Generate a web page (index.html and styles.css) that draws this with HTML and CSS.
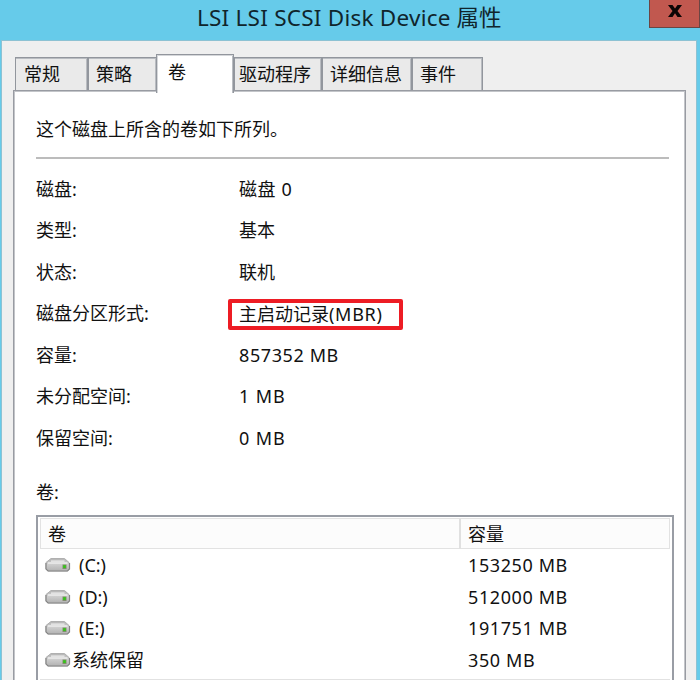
FILE: index.html
```
<!DOCTYPE html>
<html lang="zh-CN">
<head>
<meta charset="utf-8">
<title>LSI LSI SCSI Disk Device 属性</title>
<link rel="stylesheet" href="styles.css">
</head>
<body>
<svg class="defs" aria-hidden="true">
  <defs>
    <linearGradient id="top" x1="0" y1="0" x2="0" y2="1"><stop offset="0" stop-color="#b5b5b5"/><stop offset="1" stop-color="#e4e4e4"/></linearGradient>
    <linearGradient id="front" x1="0" y1="0" x2="0" y2="1"><stop offset="0" stop-color="#d2d2d2"/><stop offset="1" stop-color="#b2b2b2"/></linearGradient>
    <symbol id="drive" viewBox="0 0 26 16">
      <path d="M6 1.500H19.500L24 5.500V12L22.500 14H3L1 12V5.500Z" fill="url(#top)" stroke="#b0b0b0"/>
      <path d="M1.500 6.200H24V12L22 14H3.500L1.500 12Z" fill="url(#front)"/>
      <path d="M6 4.200H19.500M3 6H22.500" stroke="#ededed" stroke-width="1.300"/>
      <path d="M1 6V12L3 14H22.500L24.500 12V6" fill="none" stroke="#858585" stroke-width="1.200"/>
      <rect x="17.500" y="7.500" width="4" height="4.500" fill="#818b6d"/>
      <rect x="18.200" y="8.200" width="2.600" height="2.800" fill="#35c618"/>
    </symbol>
  </defs>
</svg>
<div class="window">
  <header class="titlebar">
    <h1><span class="title-name">LSI LSI SCSI Disk Device</span> 属性</h1>
    <button class="close" aria-label="关闭"><svg viewBox="0 0 16 14"><path d="M1 1H5.500L8 4.500L10.500 1H15L10.500 7L15 13H10.500L8 9.300L5.500 13H1L5.500 7Z"/></svg></button>
  </header>
  <main class="body">
    <nav class="tabs">
      <span class="tab general">常规</span>
      <span class="tab policy">策略</span>
      <span class="tab active">卷</span>
      <span class="tab driver">驱动程序</span>
      <span class="tab details">详细信息</span>
      <span class="tab events">事件</span>
    </nav>
    <section class="panel">
      <p class="intro">这个磁盘上所含的卷如下所列。</p>
      <dl class="info">
        <dt>磁盘:</dt><dd class="num">磁盘 0</dd>
        <dt>类型:</dt><dd>基本</dd>
        <dt>状态:</dt><dd>联机</dd>
        <dt>磁盘分区形式:</dt><dd class="marked">主启动记录<span class="mbr">(MBR)</span></dd>
        <dt>容量:</dt><dd class="num">857352 MB</dd>
        <dt>未分配空间:</dt><dd class="num short">1 MB</dd>
        <dt>保留空间:</dt><dd class="num short">0 MB</dd>
      </dl>
      <p class="list-label">卷:</p>
      <div class="list">
        <div class="row head"><span>卷</span><span>容量</span></div>
        <div class="row"><span class="name"><svg><use href="#drive"/></svg>(C:)</span><span class="num">153250 MB</span></div>
        <div class="row"><span class="name"><svg><use href="#drive"/></svg>(D:)</span><span class="num">512000 MB</span></div>
        <div class="row"><span class="name"><svg><use href="#drive"/></svg>(E:)</span><span class="num">191751 MB</span></div>
        <div class="row"><span class="name reserved"><svg><use href="#drive"/></svg>系统保留</span><span class="num">350 MB</span></div>
        <div class="list-end"></div>
      </div>
    </section>
  </main>
</div>
</body>
</html>
```
FILE: styles.css
```
* { box-sizing: border-box; }
body {
  margin: 0;
  overflow: hidden;
  font: 18px/24px "Noto Sans", "Noto Sans CJK SC", sans-serif;
  color: #111;
}
h1, p, dl, dd { margin: 0; }
.defs { position: absolute; width: 0; height: 0; }
.window {
  width: 700px;
  height: 680px;
  overflow: hidden;
  background: #66cbea;
  padding: 0 3px 0 1px;
}
.titlebar {
  height: 40px;
  display: flex;
  justify-content: flex-end;
}
h1 {
  width: 452px;
  padding-top: 3px;
  font-size: 22.5px;
  line-height: 30px;
  font-weight: 400;
  white-space: nowrap;
  color: #10252c;
}
.title-name { letter-spacing: .24px; }
.close {
  width: 51px;
  height: 28px;
  margin-right: -3px;
  padding: 4px 0 0;
  border: 1px solid #6b4543;
  border-top: 0;
  background: #c1584f;
  display: flex;
  justify-content: center;
}
.close svg { width: 16px; height: 14px; fill: #0b0505; }
.body {
  height: 640px;
  border: 1px solid #8dc2d3;
  border-bottom: 0;
  background: #efefef;
  padding: 13px 10px 0 11px;
}
.tabs {
  display: flex;
  align-items: flex-end;
  height: 36px;
  padding-left: 2px;
}
.tab {
  height: 33px;
  border: 1px solid #92969d;
  border-bottom: 0;
  box-shadow: inset -1px 1px #b9bcc1;
  background: #eaeaea;
  padding: 4px 0 0 8px;
  white-space: nowrap;
}
.general { width: 73px; }
.policy { width: 69px; padding-left: 7px; }
.driver { width: 88px; padding-left: 4px; }
.details { width: 90px; padding-left: 7px; }
.events { width: 71px; padding-left: 7px; }
.active {
  position: relative;
  z-index: 1;
  width: 78px;
  height: 39px;
  margin: 0 -1px -3px -1px;
  padding: 5px 0 0 11px;
  box-shadow: inset 0 1px #d5d7da, inset -1px 0 #b9bcc1, inset 1px 0 #d5d7da;
  background: #fff;
}
.driver { margin-left: 1px; }
.panel {
  height: 591px;
  border: 1px solid #989ba2;
  border-bottom: 0;
  box-shadow: inset -1px 1px #c3c5c9, inset 1px 0 #c3c5c9;
  background: #fff;
  padding: 26px 11px 0 22px;
}
.intro {
  width: 633px;
  height: 42px;
  border-bottom: 2px solid #bcbcbc;
}
.info {
  display: grid;
  grid-template-columns: 203px 1fr;
  grid-auto-rows: 41.5px;
  align-items: center;
  padding-top: 9px;
}
.num { letter-spacing: .6px; }
.short { letter-spacing: .9px; }
.mbr { letter-spacing: .7px; }
.marked {
  justify-self: start;
  width: 175px;
  height: 31px;
  line-height: 22px;
  margin: 2px 0 0 -11px;
  padding-left: 7px;
  border: 4px solid #ed1c24;
  border-radius: 2px;
}
.list-label { padding-top: 21px; height: 56px; }
.list {
  width: 638px;
  height: 190px;
  border: 2px solid #999da5;
  border-bottom: 0;
  padding: 1px 2px 0;
}
.row {
  height: 31.5px;
  display: grid;
  grid-template-columns: 420px 1fr;
  align-items: center;
}
.row > :last-child { padding-left: 8px; }
.head {
  height: 31px;
  margin-bottom: 1px;
  border: 1px solid #e2e2e2;
  background: #fcfcfc;
  align-items: stretch;
  line-height: 30px;
}
.head > :first-child {
  padding-left: 7px;
  border-right: 2px solid #e0e0e0;
}
.row.head > :last-child { padding-left: 7px; }
.name { display: flex; align-items: center; padding-left: 5px; }
.name svg { width: 26px; height: 16px; margin-right: 8px; }
.name.reserved svg { margin-right: 1px; }
.list-end { border-top: 1px solid #e2e2e2; margin-top: 3px; }
```
